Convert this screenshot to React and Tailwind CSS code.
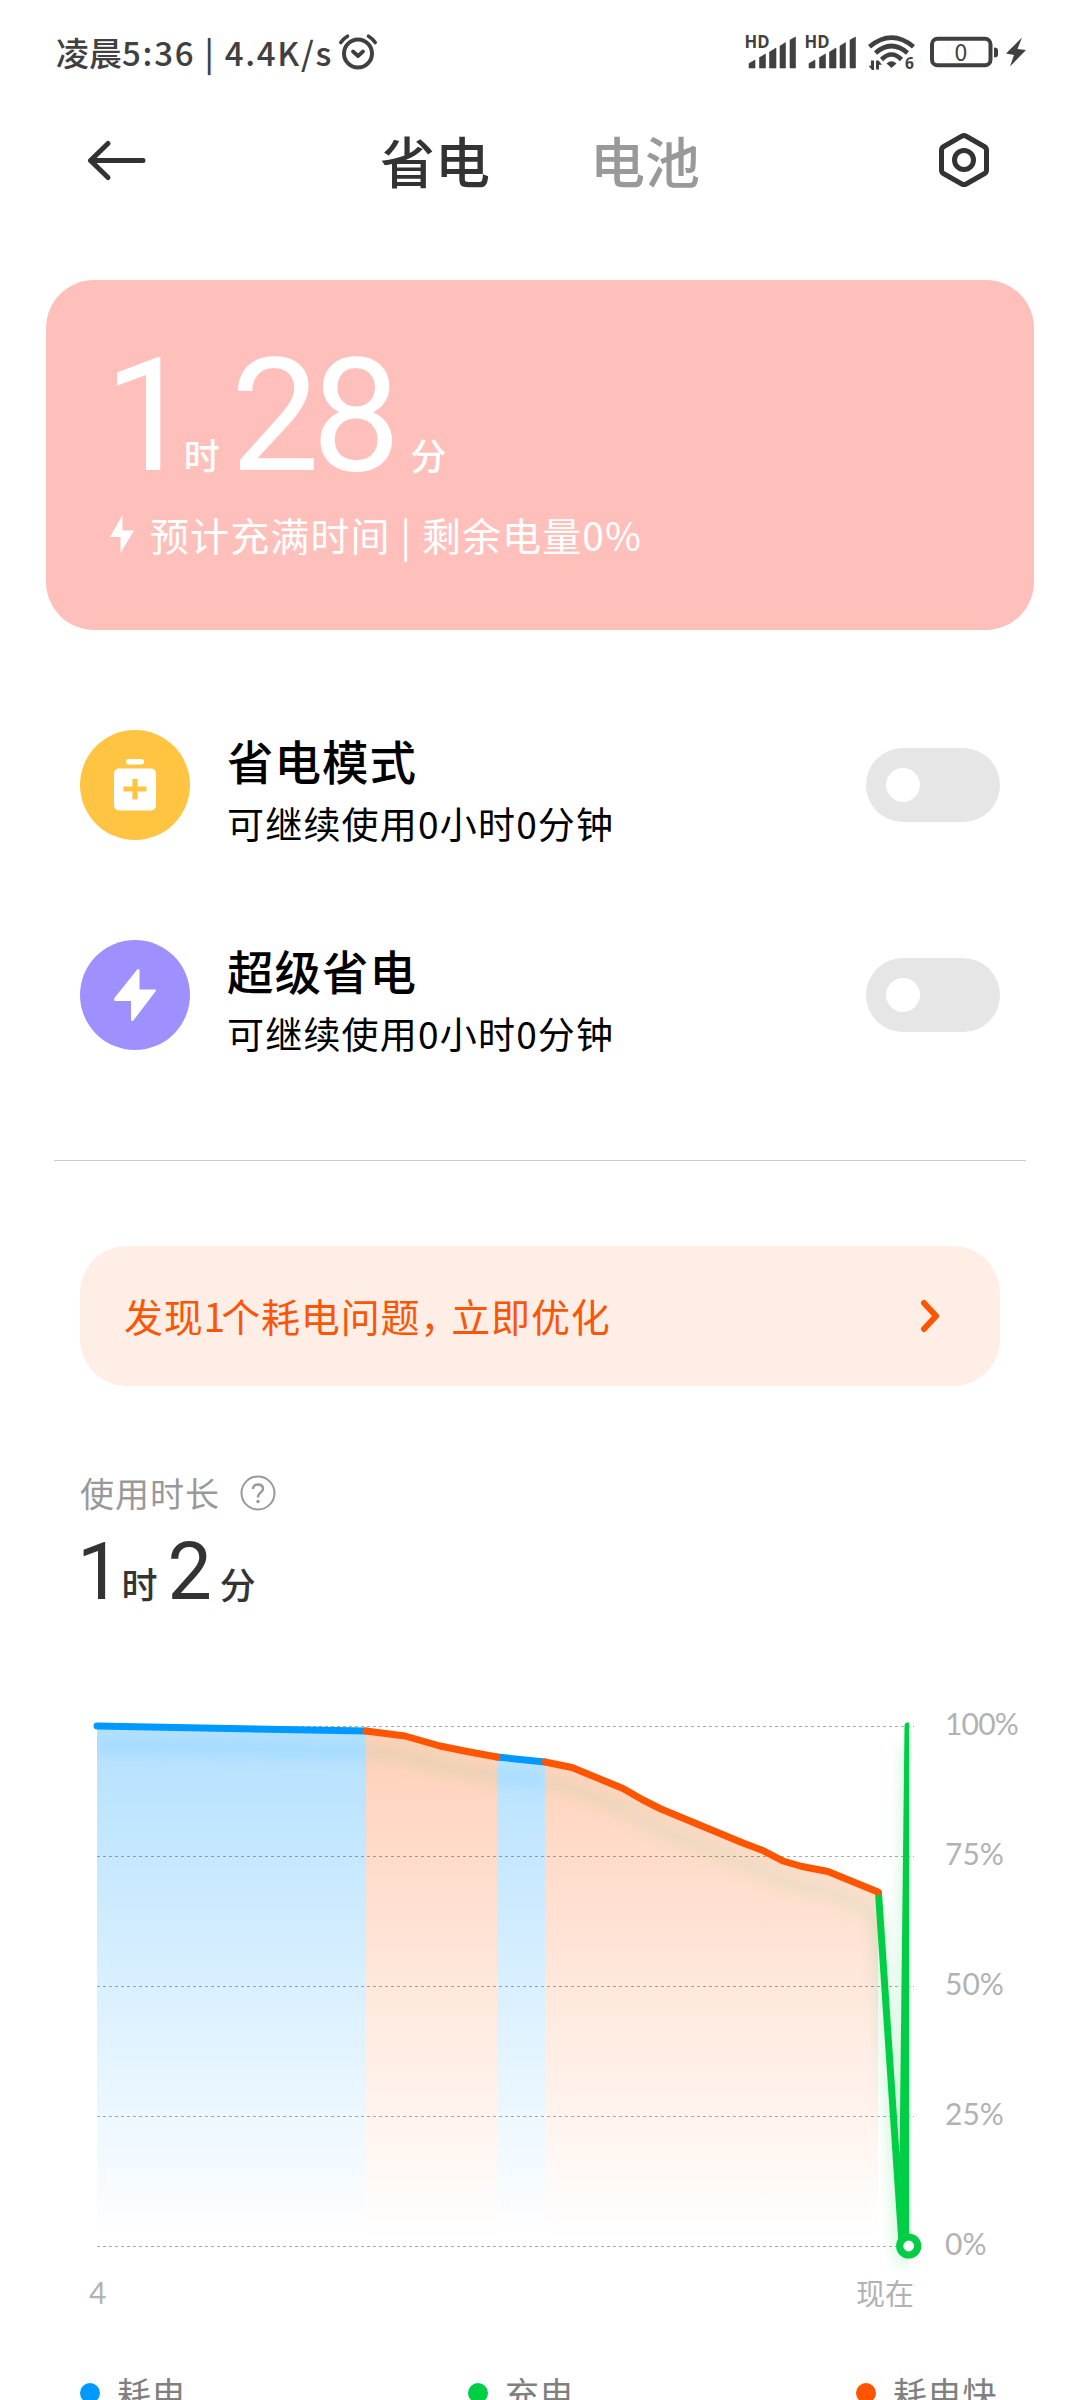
import React, { useState } from 'react';

// Battery level samples, in chart pixels (x, y)
const BLUE_START = [ [ 97, 1726 ], [ 366, 1731 ] ];
const ORANGE_FIRST = [ [ 366, 1731 ], [ 405, 1736 ], [ 440, 1746 ], [ 467, 1751.5 ], [ 497, 1757 ] ];
const BLUE_SECOND = [ [ 497, 1757 ], [ 545, 1762 ] ];
const ORANGE_SECOND = [
  [ 545, 1762 ], [ 572, 1767.5 ], [ 623, 1788.5 ], [ 643, 1800 ], [ 661, 1809 ], [ 743, 1843 ],
  [ 763, 1850.5 ], [ 783, 1861 ], [ 802, 1866.5 ], [ 828, 1871.5 ], [ 878, 1892 ]
];
const GREEN = [ [ 878.5, 1893 ], [ 902, 2244 ], [ 908, 1726 ], [ 909, 2244 ] ];

const LEVELS = [ '100%', '75%', '50%', '25%', '0%' ];

const toPoints = ( list ) => list.map( ( p ) => p.join( ',' ) ).join( ' ' );

// Closes a line down to the 0% axis
const toArea = ( list ) => `${ toPoints( list ) } ${ list[ list.length - 1 ][ 0 ] },2246 ${ list[ 0 ][ 0 ] },2246`;

const SignalIcon = () => (
  <svg className="overflow-visible" width="50" height="34" viewBox="0 0 50 34" fill="#404040">
    <text x="-1.500" y="12.500" fontSize="17" fontWeight="700" fontFamily="'Open Sans', sans-serif" textLength="25" lengthAdjust="spacingAndGlyphs">HD</text>
    <path d="M3 33V28.500L9 25V33Z M13.500 33V22.500L19.500 19V33Z M23.500 33V17L30 13V33Z M34 33V11L39.500 7.500V33Z M44 33V5L49.500 2V33Z" stroke="#404040" strokeWidth="0.6" strokeLinejoin="round" />
  </svg>
);

const WifiIcon = () => (
  <svg className="overflow-visible" width="48" height="36" viewBox="0 0 48 36" fill="none" stroke="#404040" strokeWidth="4.600">
    <path d="M1.500 12.800Q23.500 -5.400 45.500 12.800" />
    <path d="M7.500 19Q23.500 5 39.500 19" />
    <path d="M13.500 25.500Q23.500 15.500 33.500 25.500" />
    <path d="M18.500 29.500Q23.500 25 28.500 29.500L23.500 34Z" fill="#404040" stroke="none" />
    <path d="M6 26.500V36H4L0.500 31.800H3V26.500Z M8 35.500V26.500H10.500L14 30.800H11V35.500Z" fill="#404040" stroke="none" />
    <text x="37" y="35" fontSize="15.500" fontWeight="700" fontFamily="'Open Sans', sans-serif" fill="#404040" stroke="none">6</text>
  </svg>
);

const BatteryIcon = () => (
  <svg className="overflow-visible" width="70" height="32" viewBox="0 0 70 32">
    <rect x="2" y="2.700" width="58.500" height="26.600" rx="5.500" fill="none" stroke="#404040" strokeWidth="4" />
    <path d="M64 11.500Q68 11.500 68 14V19Q68 21.500 64 21.500Z" fill="#404040" />
    <text x="31" y="24.500" textAnchor="middle" fontSize="23" fontFamily="'Noto Sans CJK SC', sans-serif" fill="#404040">0</text>
  </svg>
);

const StatusBar = () => (
  <div className="flex h-[104px] items-center pl-14 pr-[54px] text-[#404040]">
    <span className="text-[33px] font-medium leading-[40px]">凌晨</span>
    <span className="w-[210px] whitespace-pre text-[33px] font-medium leading-[40px] tracking-[1.750px]">5:36 | 4.4K/s</span>
    <svg className="ml-1.5" width="40" height="40" viewBox="0 0 40 40" fill="none" stroke="#404040" strokeWidth="4" strokeLinecap="round" strokeLinejoin="round">
      <circle cx="20" cy="21.500" r="14" />
      <path d="M15 19.500L20 24L25 19.500" strokeWidth="3.800" />
      <path d="M2.800 10.500Q5.500 6.500 9.500 4.200M37.200 10.500Q34.500 6.500 30.500 4.200" strokeWidth="3.600" />
    </svg>
    <div className="ml-auto flex items-center">
      <SignalIcon />
      <div className="ml-2.5"><SignalIcon /></div>
      <div className="ml-3"><WifiIcon /></div>
      <div className="ml-3.5"><BatteryIcon /></div>
      <svg className="ml-1.5" width="20" height="30" viewBox="0 0 20 30" fill="#404040">
        <path d="M16 0.500L0 16.500L8 18L4 29.500L20 13L11.500 12Z" />
      </svg>
    </div>
  </div>
);

const Header = () => (
  <div className="flex h-28 items-center pl-[86px] pr-[88px]">
    <svg width="60" height="44" viewBox="0 0 60 44" fill="none" stroke="#333" strokeWidth="5" strokeLinecap="round" strokeLinejoin="round">
      <path d="M57 22.500H4.500M22 5.500L4.500 22.500L22 39.500" />
    </svg>
    <div className="ml-[234px] flex gap-[100px] pb-0.5 text-[55px] font-medium leading-[60px]">
      <span className="text-[#333]">省电</span>
      <span className="text-[#999]">电池</span>
    </div>
    <svg className="ml-auto" width="56" height="56" viewBox="0 0 56 56" fill="none" stroke="#333" strokeWidth="5" strokeLinejoin="round">
      <path d="M25.800 4.200Q28 3 30.200 4.200L48.200 14.500Q50.500 15.800 50.500 18.200V38.200Q50.500 40.500 48.200 41.800L30.200 52Q28 53.200 25.800 52L7.800 41.800Q5.500 40.500 5.500 38.200V18.200Q5.500 15.800 7.800 14.500Z" />
      <circle cx="28" cy="28" r="9.500" />
    </svg>
  </div>
);

const ChargeCard = () => (
  <div className="mx-[46px] mt-16 h-[350px] rounded-[48px] bg-[#ffc0bc] pl-16 text-white">
    <div className="flex h-[214px] items-baseline pt-[43px]">
      <span className="-ml-1.5 font-[Roboto] text-[158px] leading-[186px] tracking-[-9px]">1</span>
      <span className="text-[36px] font-medium">时</span>
      <span className="ml-[11px] font-[Roboto] text-[158px] leading-[186px] tracking-[-8px]">28</span>
      <span className="ml-[18px] text-[36px] font-medium">分</span>
    </div>
    <div className="mt-4 flex items-center">
      <svg width="24" height="38" viewBox="0 0 24 38" fill="currentColor">
        <path d="M12.500 0L0 22H10.500V38L24 15.500H12.500Z" />
      </svg>
      <span className="ml-4 whitespace-pre text-[39px] leading-[48px] tracking-[1.100px]">预计充满时间 | 剩余电量0%</span>
    </div>
  </div>
);

const Toggle = () => {
  const [ on, setOn ] = useState( false );

  return (
    <button
      onClick={ () => setOn( !on ) }
      className={ `flex h-[74px] w-[134px] items-center rounded-full px-5 ${ on ? 'justify-end bg-[#0d84ff]' : 'bg-[#e6e6e6]' }` }
    >
      <span className="size-[34px] rounded-full bg-white" />
    </button>
  );
};

const ModeRow = ( { title, color, icon } ) => (
  <div className="flex h-[110px] items-center">
    <div className={ `flex size-[110px] items-center justify-center rounded-full ${ color }` }>{ icon }</div>
    <div className="ml-[37px] flex-1 pt-3">
      <p className="text-[46.5px] font-medium leading-[60px] tracking-[1px] text-black">{ title }</p>
      <p className="mt-1 text-[37px] leading-[58px] tracking-[1.200px] text-black">可继续使用0小时0分钟</p>
    </div>
    <Toggle />
  </div>
);

const BatteryPlusIcon = () => (
  <svg width="42" height="52" viewBox="0 0 42 52">
    <rect x="12" y="0" width="18" height="5.500" rx="2.700" fill="#fff" />
    <rect x="0" y="9.500" width="42" height="42" rx="5" fill="#fff" />
    <path d="M9.500 30H32.500M21 20V40.500" stroke="#ffc542" strokeWidth="5.200" />
  </svg>
);

const BoltIcon = () => (
  <svg width="42" height="52" viewBox="0 0 42 52" fill="#fff" stroke="#fff" strokeWidth="2" strokeLinejoin="round">
    <path d="M24.500 1V21.500H41L18.500 51H18V31H1.200V29.500L24 1Z" />
  </svg>
);

const UsageChart = () => (
  <div className="flex">
    <svg width="945" height="610" viewBox="0 1690 945 610" fill="none">
      <defs>
        <linearGradient id="blueFill" gradientUnits="userSpaceOnUse" x1="0" y1="1726" x2="0" y2="2240">
          <stop offset="0" stopColor="#0099ff" stopOpacity="0.3" />
          <stop offset="1" stopColor="#0099ff" stopOpacity="0" />
        </linearGradient>
        <linearGradient id="orangeFill" gradientUnits="userSpaceOnUse" x1="0" y1="1726" x2="0" y2="2240">
          <stop offset="0" stopColor="#ff5500" stopOpacity="0.28" />
          <stop offset="1" stopColor="#ff5500" stopOpacity="0" />
        </linearGradient>
        <filter id="glow" filterUnits="userSpaceOnUse" x="60" y="1690" width="880" height="620">
          <feGaussianBlur stdDeviation="7" />
        </filter>
        <clipPath id="plot"><rect x="90" y="1690" width="819" height="610" /></clipPath>
        <clipPath id="plotGlow"><rect x="97" y="1690" width="812" height="610" /></clipPath>
      </defs>

      {/* Areas under the line */ }
      <polygon points={ toArea( BLUE_START ) } fill="url(#blueFill)" />
      <polygon points={ toArea( ORANGE_FIRST ) } fill="url(#orangeFill)" />
      <polygon points={ toArea( BLUE_SECOND ) } fill="url(#blueFill)" />
      <polygon points={ toArea( ORANGE_SECOND ) } fill="url(#orangeFill)" />

      {/* Soft shadow under the line */ }
      <g clipPath="url(#plotGlow)">
        <g filter="url(#glow)" transform="translate(0 20)" strokeWidth="14">
          <polyline points={ toPoints( BLUE_START ) } stroke="#0099ff" strokeOpacity="0.1" />
          <polyline points={ toPoints( ORANGE_FIRST ) } stroke="#00cc44" strokeOpacity="0.09" />
          <polyline points={ toPoints( BLUE_SECOND ) } stroke="#0099ff" strokeOpacity="0.1" />
          <polyline points={ toPoints( ORANGE_SECOND ) } stroke="#00cc44" strokeOpacity="0.08" />
          <polyline points={ toPoints( GREEN ) } stroke="#00cc44" strokeOpacity="0.15" />
        </g>
      </g>
      <rect x="909" y="1730" width="3" height="516" fill="#00cc44" fillOpacity="0.1" />

      {/* Grid */ }
      { [ 1726.5, 1856.5, 1986.5, 2116.5, 2246.5 ].map( ( y ) => (
        <path key={ y } d={ `M97 ${ y }H914` } stroke="#000" strokeOpacity="0.32" strokeDasharray="3 3" />
      ) ) }

      <g clipPath="url(#plot)" strokeWidth="7" strokeLinecap="round" strokeLinejoin="round">
        <polyline points={ toPoints( GREEN ) } stroke="#00cf45" />
        <polyline points={ toPoints( BLUE_START ) } stroke="#0099ff" />
        <polyline points={ toPoints( BLUE_SECOND ) } stroke="#0099ff" />
        <polyline points={ toPoints( ORANGE_FIRST ) } stroke="#ff5500" />
        <polyline points={ toPoints( ORANGE_SECOND ) } stroke="#ff5500" />
      </g>
      <circle cx="908.700" cy="2246" r="9" fill="#fff" stroke="#00cf45" strokeWidth="7.200" />
    </svg>
    <div className="flex flex-col pt-[13px] font-[Lato] text-[30px] leading-[40px] text-[#b2b2b2]">
      { LEVELS.map( ( level ) => (
        <span key={ level } className={ `h-[130px] ${ level === '100%' ? 'tracking-[-0.8px]' : '' }` }>{ level }</span>
      ) ) }
    </div>
  </div>
);

const LegendItem = ( { color, label, width } ) => (
  <div className={ `flex items-center ${ width }` }>
    <span className={ `size-5 rounded-full ${ color }` } />
    <span className="ml-[17px] text-[34px] leading-[40px] tracking-[0.800px] text-[#808080]">{ label }</span>
  </div>
);

const App = () => (
  <div className="h-[2400px] w-[1080px] overflow-hidden bg-white font-['Noto_Sans_CJK_SC',sans-serif]">
    <StatusBar />
    <Header />
    <ChargeCard />

    <div className="mx-20 mt-[100px] flex flex-col gap-[100px]">
      <ModeRow title="省电模式" color="bg-[#ffc542]" icon={ <BatteryPlusIcon /> } />
      <ModeRow title="超级省电" color="bg-[#9e91ff]" icon={ <BoltIcon /> } />
    </div>

    <div className="mx-[54px] mt-[110px] h-px bg-[#ccc]" />

    {/* Optimisation tip */ }
    <div className="mx-20 mt-[85px] flex h-[140px] items-center rounded-[47px] bg-[#ffeee6] pl-11 pr-[60px] text-[#fb5607]">
      <p className="pb-0.5 text-[39px] leading-[50px] tracking-[0.800px]">
        发现<span className="tracking-[-4px]">1</span>个耗电问题<span className="tracking-[-8px]">，</span>立即优化
      </p>
      <svg className="ml-auto" width="20" height="34" viewBox="0 0 20 34" fill="none" stroke="#ff5500" strokeWidth="6" strokeLinecap="round" strokeLinejoin="round">
        <path d="M4 4L16 17L4 30" />
      </svg>
    </div>

    {/* Usage time */ }
    <div className="mt-[84px] flex items-center pl-20">
      <span className="text-[34px] leading-[46px] tracking-[1px] text-[#999]">使用时长</span>
      <svg className="ml-5" width="36" height="36" viewBox="0 0 36 36" fill="none" stroke="#999" strokeWidth="2">
        <circle cx="18" cy="18" r="16.500" />
        <path d="M13 14Q13 9.500 18 9.500Q23 9.500 23 13.800Q23 16 20.500 17.800Q18 19.500 18 22.500" strokeWidth="2.400" />
        <circle cx="18" cy="26.500" r="1.700" fill="#999" stroke="none" />
      </svg>
    </div>
    <div className="mt-[11px] flex h-[90px] items-baseline pl-[77px] text-[#333]">
      <span className="font-[Roboto] text-[79px] leading-[90px]">1</span>
      <span className="text-[36px] font-medium leading-[40px]">时</span>
      <span className="ml-2.5 font-[Roboto] text-[79px] leading-[90px] tracking-[-4px]">2</span>
      <span className="ml-3 text-[36px] font-medium leading-[40px]">分</span>
    </div>

    <div className="mt-[73px] h-[582px]"><UsageChart /></div>
    <div className="flex justify-between pl-[89px] pr-[166px] text-[29px] leading-[40px] text-[#b2b2b2]">
      <span className="font-[Lato] text-[30px]">4</span>
      <span>现在</span>
    </div>

    <div className="mt-[61px] flex pl-20">
      <LegendItem color="bg-[#0099ff]" label="耗电" width="w-[388px]" />
      <LegendItem color="bg-[#00cf45]" label="充电" width="w-[388px]" />
      <LegendItem color="bg-[#ff5500]" label="耗电快" width="w-[200px]" />
    </div>
  </div>
);

export default App;
